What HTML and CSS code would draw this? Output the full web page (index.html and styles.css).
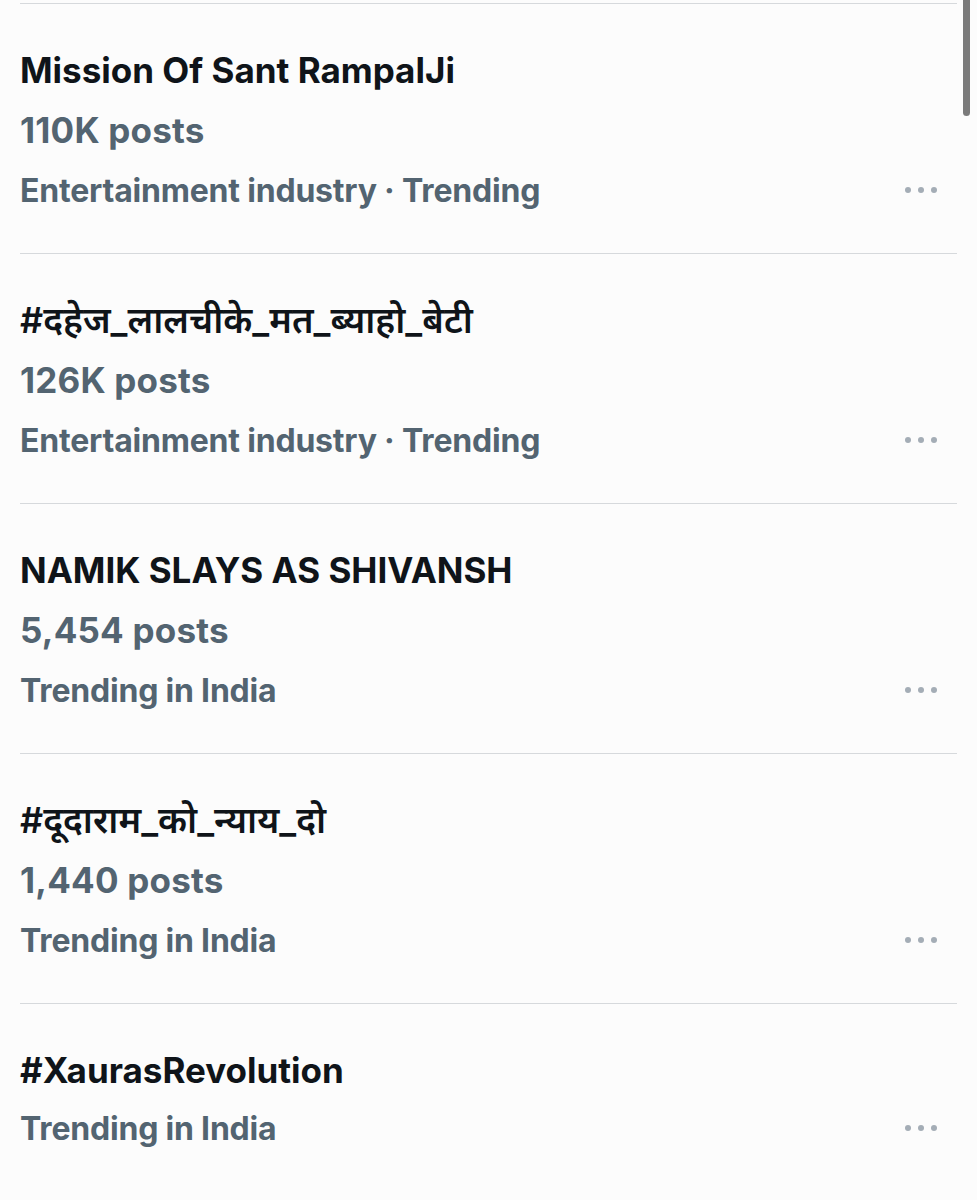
FILE: index.html
```html
<!DOCTYPE html>
<html lang="en">
<head>
<meta charset="utf-8">
<title>Trends</title>
<link rel="stylesheet" href="styles.css">
</head>
<body>
<div class="scrollbar"></div>
<main class="trends">
  <section class="trend">
    <div class="title">Mission Of Sant RampalJi</div>
    <div class="posts">110K posts</div>
    <div class="meta-row"><span class="meta">Entertainment industry · Trending</span><span class="more"><i></i><i></i><i></i></span></div>
  </section>
  <section class="trend">
    <div class="title" lang="hi">#दहेज_लालचीके_मत_ब्याहो_बेटी</div>
    <div class="posts">126K posts</div>
    <div class="meta-row"><span class="meta">Entertainment industry · Trending</span><span class="more"><i></i><i></i><i></i></span></div>
  </section>
  <section class="trend">
    <div class="title">NAMIK SLAYS AS SHIVANSH</div>
    <div class="posts">5,454 posts</div>
    <div class="meta-row"><span class="meta">Trending in India</span><span class="more"><i></i><i></i><i></i></span></div>
  </section>
  <section class="trend">
    <div class="title" lang="hi">#दूदाराम_को_न्याय_दो</div>
    <div class="posts">1,440 posts</div>
    <div class="meta-row"><span class="meta">Trending in India</span><span class="more"><i></i><i></i><i></i></span></div>
  </section>
  <section class="trend short">
    <div class="title">#XaurasRevolution</div>
    <div class="meta-row"><span class="meta">Trending in India</span><span class="more"><i></i><i></i><i></i></span></div>
  </section>
</main>
</body>
</html>
```

FILE: styles.css
```css
html, body {
  margin: 0;
  padding: 0;
  background: #fcfcfc;
}
body {
  font-family: Inter, "Noto Sans", "Noto Sans Devanagari", sans-serif;
  color: #0f1419;
  overflow: hidden;
  height: 1200px;
}
.scrollbar {
  position: absolute;
  top: 0;
  left: 963px;
  width: 7px;
  height: 116px;
  background: #7b7b7b;
  border-radius: 0 0 4px 4px;
}
.trends {
  margin: 3px 20px 0 20px;
}
.trend {
  border-top: 1px solid #d6d9dc;
  padding: 36px 0 33px 0;
}
.trend.short {
  padding-bottom: 0;
}
.trend.short .meta-row {
  margin-top: -2px;
}
.title {
  font-size: 35px;
  font-weight: 700;
  line-height: 60px;
  letter-spacing: 0;
  white-space: nowrap;
}
.title:lang(hi) {
  font-size: 36px;
  font-weight: 600;
}
.posts {
  font-size: 35px;
  font-weight: 700;
  line-height: 60px;
  color: #536471;
  letter-spacing: 0.2px;
}
.meta-row {
  display: flex;
  align-items: center;
  justify-content: space-between;
  height: 60px;
}
.meta {
  font-size: 32px;
  font-weight: 700;
  color: #536471;
  letter-spacing: -0.2px;
}
.more {
  display: flex;
  gap: 7px;
  margin-right: 20px;
}
.more i {
  display: block;
  width: 6px;
  height: 6px;
  border-radius: 50%;
  background: #a4adb6;
}
```
